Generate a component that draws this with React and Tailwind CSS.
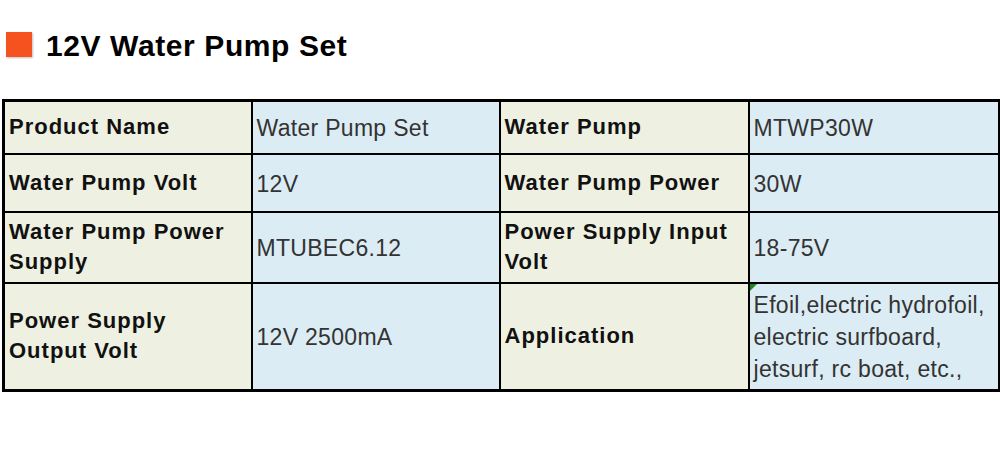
const rows = [
  [
    { label: 'Product Name', value: 'Water Pump Set' },
    { label: 'Water Pump', value: 'MTWP30W' },
    'h-[53px]',
  ],
  [
    { label: 'Water Pump Volt', value: '12V' },
    { label: 'Water Pump Power', value: '30W' },
    'h-[58px]',
  ],
  [
    { label: ['Water Pump Power', 'Supply'], value: 'MTUBEC6.12' },
    { label: ['Power Supply Input', 'Volt'], value: '18-75V' },
    'h-[71px]',
  ],
  [
    { label: ['Power Supply', 'Output Volt'], value: '12V 2500mA' },
    {
      label: 'Application',
      value: ['Efoil,electric hydrofoil,', 'electric surfboard,', 'jetsurf, rc boat, etc.,'],
      marker: true,
    },
    'h-[108px]',
  ],
];

function Lines({ text }) {
  const lines = Array.isArray(text) ? text : [text];
  return lines.map((l, i) => <div key={i}>{l}</div>);
}

function Label({ text }) {
  return (
    <td className="border-2 border-black bg-[#eef0e1] px-[4px] align-middle text-[22px] font-bold leading-[30px] tracking-[1px] text-[#111]">
      <Lines text={text} />
    </td>
  );
}

function Value({ text, marker }) {
  return (
    <td className="relative border-2 border-black bg-[#dcecf4] px-[4px] pt-[2px] align-middle text-[23px] leading-[32px] tracking-[0.3px] text-[#333]">
      {marker && (
        <span className="absolute left-0 top-0 h-0 w-0 border-t-[7px] border-r-[7px] border-t-[#1a8a1a] border-r-transparent" />
      )}
      <Lines text={text} />
    </td>
  );
}

export default function App() {
  return (
    <div className="h-[450px] w-[1000px] bg-white font-['Liberation_Sans',Arial,sans-serif]">
      {/* Heading */}
      <div className="flex h-[99px] items-start pl-[6px] pt-[31px]">
        <span className="mt-[1px] h-[25px] w-[26px] bg-[#f5521f] shadow-[1px_1px_2px_rgba(0,0,0,0.25)]" />
        <h1 className="ml-[14px] -mt-[1px] text-[30px] font-bold leading-[32px] tracking-[0.6px] text-black">
          12V Water Pump Set
        </h1>
      </div>

      {/* Spec table */}
      <div className="pl-[2px]">
        <table className="w-[996px] table-fixed border-collapse border-[3px] border-black">
          <colgroup>
            <col className="w-[248px]" />
            <col className="w-[248px]" />
            <col className="w-[249px]" />
            <col className="w-[251px]" />
          </colgroup>
          <tbody>
            {rows.map(([a, b, h], i) => (
              <tr key={i} className={h}>
                <Label text={a.label} />
                <Value text={a.value} />
                <Label text={b.label} />
                <Value text={b.value} marker={b.marker} />
              </tr>
            ))}
          </tbody>
        </table>
      </div>
    </div>
  );
}
